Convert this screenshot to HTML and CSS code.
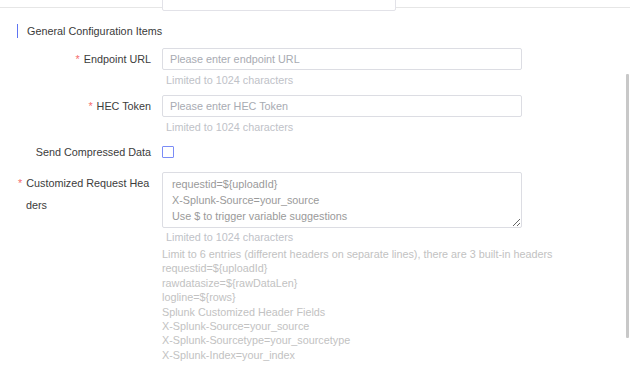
FILE: index.html
```html
<!DOCTYPE html>
<html>
<head>
<meta charset="utf-8">
<link rel="stylesheet" href="styles.css">
</head>
<body>
<div class="page">
  <div class="topbar"></div>
  <div class="prev-box"></div>
  <div class="section-title">General Configuration Items</div>

  <div class="item item-endpoint">
    <label class="label"><span class="req">*</span>Endpoint URL</label>
    <div class="control">
      <input class="input" type="text" placeholder="Please enter endpoint URL">
      <div class="hint">Limited to 1024 characters</div>
    </div>
  </div>

  <div class="item item-hec">
    <label class="label"><span class="req">*</span>HEC Token</label>
    <div class="control">
      <input class="input" type="text" placeholder="Please enter HEC Token">
      <div class="hint">Limited to 1024 characters</div>
    </div>
  </div>

  <div class="item item-check">
    <label class="label">Send Compressed Data</label>
    <div class="control check-control">
      <span class="checkbox"></span>
    </div>
  </div>

  <div class="item item-headers">
    <label class="label label-wrap"><span class="req">*</span>Customized Request Headers</label>
    <div class="control">
      <textarea class="textarea" placeholder="requestid=${uploadId}&#10;X-Splunk-Source=your_source&#10;Use $ to trigger variable suggestions"></textarea>
      <div class="hint">Limited to 1024 characters</div>
      <div class="notes">
        <div>Limit to 6 entries (different headers on separate lines), there are 3 built-in headers</div>
        <div>requestid=${uploadId}</div>
        <div>rawdatasize=${rawDataLen}</div>
        <div>logline=${rows}</div>
        <div>Splunk Customized Header Fields</div>
        <div>X-Splunk-Source=your_source</div>
        <div>X-Splunk-Sourcetype=your_sourcetype</div>
        <div>X-Splunk-Index=your_index</div>
      </div>
    </div>
  </div>

  <div class="scrollbar"></div>
</div>
</body>
</html>
```

FILE: styles.css
```css
* { box-sizing: border-box; }
html, body {
  margin: 0;
  padding: 0;
  background: #ffffff;
}
body {
  font-family: "Liberation Sans", Arial, sans-serif;
  font-size: 10.8px;
  color: #333333;
  width: 630px;
  height: 373px;
  overflow: hidden;
}
.page {
  position: relative;
  width: 630px;
  height: 373px;
}
.topbar {
  height: 8px;
  border-bottom: 1px solid #e6e6e6;
}
.prev-box {
  position: absolute;
  left: 162px;
  top: -20px;
  width: 234px;
  height: 31px;
  background: #ffffff;
  border: 1px solid #e2e2e8;
  border-radius: 2px;
}
.section-title {
  margin: 16px 0 10px 17px;
  padding-left: 9px;
  height: 14px;
  line-height: 14px;
  border-left: 1px solid #5f74f2;
  color: #3a3a3a;
}
.item {
  display: grid;
  grid-template-columns: 162px 360px;
}
.label {
  text-align: right;
  padding-right: 11px;
  line-height: 22px;
  color: #3c3c3c;
  white-space: nowrap;
}
.label-wrap {
  white-space: normal;
  text-align: left;
  padding-left: 26px;
  text-indent: -8px;
  padding-right: 11px;
  word-break: break-all;
}
.req {
  color: #f56c6c;
  margin-right: 4px;
}
.control {
  display: flex;
  flex-direction: column;
}
.input {
  display: block;
  width: 360px;
  height: 22px;
  margin: 0;
  padding: 0 7px;
  border: 1px solid #dcdde3;
  border-radius: 2px;
  font-family: "Liberation Sans", Arial, sans-serif;
  font-size: 10.8px;
  color: #333;
  background: #fff;
  outline: none;
}
.input::placeholder,
.textarea::placeholder {
  color: #a8abb2;
  opacity: 1;
}
.textarea::placeholder { color: #9a9a9a; }
.hint {
  margin-top: 3px;
  padding-left: 4px;
  line-height: 14px;
  color: #c0c2c8;
}
.item-endpoint { margin-bottom: 8px; }
.item-hec { margin-bottom: 7px; }
.item-check { margin-bottom: 9px; }
.check-control {
  justify-content: center;
  height: 22px;
}
.checkbox {
  display: block;
  width: 12px;
  height: 12px;
  border: 1px solid #7b8cf6;
  border-radius: 1px;
}
.textarea {
  display: block;
  width: 360px;
  height: 56px;
  margin: 0;
  padding: 3px 9px;
  border: 1px solid #dcdde3;
  border-radius: 2px;
  font-family: "Liberation Sans", Arial, sans-serif;
  font-size: 10.8px;
  line-height: 16px;
  resize: vertical;
  outline: none;
  background: #fff;
}
.item-headers .hint { margin-top: 2px; }
.notes {
  margin-top: 3px;
  line-height: 14.4px;
  color: #c2c2c2;
  white-space: nowrap;
}
.scrollbar {
  position: absolute;
  left: 626px;
  top: 74px;
  width: 3px;
  height: 264px;
  background: #c8c8c8;
  border-radius: 1px;
}
```
